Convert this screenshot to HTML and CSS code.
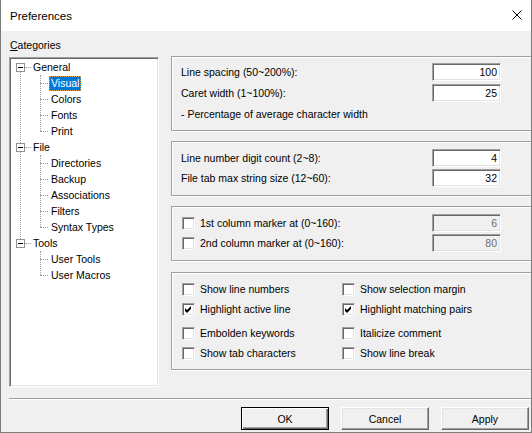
FILE: index.html
```html
<!DOCTYPE html>
<html lang="en">
<head>
<meta charset="UTF-8">
<title>Preferences</title>
<link rel="stylesheet" href="styles.css">
</head>
<body>

<div class="window">
  <!-- title bar -->
  <div class="titlebar">
    <span>Preferences</span>
    <svg class="close" width="10" height="10" viewBox="0 0 10 10"><path d="M0.5 0.5L9.5 9.5M9.5 0.5L0.5 9.5" stroke="#000" stroke-width="1"/></svg>
  </div>

  <div class="dialog-body">
    <div class="main">
      <!-- categories tree -->
      <div class="categories">
        <div class="cat-label"><span class="u">C</span>ategories</div>
        <ul class="tree">
          <li>
            <div class="row"><span class="toggle"></span><span class="label">General</span></div>
            <ul class="children">
              <li><span class="label selected">Visual</span></li>
              <li><span class="label">Colors</span></li>
              <li><span class="label">Fonts</span></li>
              <li><span class="label">Print</span></li>
            </ul>
          </li>
          <li>
            <div class="row"><span class="toggle"></span><span class="label">File</span></div>
            <ul class="children">
              <li><span class="label">Directories</span></li>
              <li><span class="label">Backup</span></li>
              <li><span class="label">Associations</span></li>
              <li><span class="label">Filters</span></li>
              <li><span class="label">Syntax Types</span></li>
            </ul>
          </li>
          <li>
            <div class="row"><span class="toggle"></span><span class="label">Tools</span></div>
            <ul class="children">
              <li><span class="label">User Tools</span></li>
              <li><span class="label">User Macros</span></li>
            </ul>
          </li>
        </ul>
      </div>

      <!-- visual page -->
      <div class="pages">
        <div class="group group-spacing">
          <div class="field-row"><span>Line spacing (50~200%):</span><input class="edit" type="text" value="100" readonly></div>
          <div class="field-row"><span>Caret width (1~100%):</span><input class="edit" type="text" value="25" readonly></div>
          <div class="field-row"><span>- Percentage of average character width</span></div>
        </div>

        <div class="group">
          <div class="field-row"><span>Line number digit count (2~8):</span><input class="edit" type="text" value="4" readonly></div>
          <div class="field-row"><span>File tab max string size (12~60):</span><input class="edit" type="text" value="32" readonly></div>
        </div>

        <div class="group">
          <div class="field-row">
            <label class="check"><span class="box"></span>1st column marker at (0~160):</label>
            <input class="edit" type="text" value="6" disabled>
          </div>
          <div class="field-row">
            <label class="check"><span class="box"></span>2nd column marker at (0~160):</label>
            <input class="edit" type="text" value="80" disabled>
          </div>
        </div>

        <div class="group group-checks">
          <div class="check-grid">
            <label class="check"><span class="box"></span>Show line numbers</label>
            <label class="check"><span class="box"></span>Show selection margin</label>
            <label class="check"><span class="box"><svg width="7" height="7" viewBox="0 0 7 7"><path d="M0 2L2 4L6 0L6 3L2 7L0 5Z" fill="#000"/></svg></span>Highlight active line</label>
            <label class="check"><span class="box"><svg width="7" height="7" viewBox="0 0 7 7"><path d="M0 2L2 4L6 0L6 3L2 7L0 5Z" fill="#000"/></svg></span>Highlight matching pairs</label>
          </div>
          <div class="check-grid">
            <label class="check"><span class="box"></span>Embolden keywords</label>
            <label class="check"><span class="box"></span>Italicize comment</label>
            <label class="check"><span class="box"></span>Show tab characters</label>
            <label class="check"><span class="box"></span>Show line break</label>
          </div>
        </div>
      </div>
    </div>

    <div class="separator"></div>

    <div class="buttons">
      <button class="btn default">OK</button>
      <button class="btn">Cancel</button>
      <button class="btn">Apply</button>
    </div>
  </div>
</div>

</body>
</html>
```

FILE: styles.css
```css
:root{
  --face:   #f0f0f0;   /* dialog background */
  --shadow: #a0a0a0;   /* 3d shadow */
  --dark:   #696969;   /* 3d dark shadow */
  --light:  #e3e3e3;   /* 3d light */
  --select: #0078d7;
}
*{ box-sizing:border-box; }

body{
  margin:0;
  font-family:"Liberation Sans", Arial, sans-serif;
  font-size:10.5px;
  color:#000;
  background:#fff;
}

/* the dialog window */
.window{
  width:532px; height:433px;
  border:1px solid #7a7a7a;
  border-top:none;
  background:var(--face);
  display:flex;
  flex-direction:column;
  overflow:hidden;
}

.titlebar{
  flex:none;
  height:31px;
  background:#fff;
  display:flex;
  align-items:center;
  justify-content:space-between;
  padding:0 9px;
  font-size:11.5px;
}
.close{ margin-top:-1px; }

.dialog-body{
  flex:1;
  display:flex;
  flex-direction:column;
  padding:7px 0 0 8px;
}
.main{
  display:flex;
  align-items:flex-start;
  gap:12px;
}

/* categories tree */
.categories{ width:150px; flex:none; }
.cat-label{ line-height:14px; margin-bottom:5px; padding-left:1px; }
.u{ text-decoration:underline; }

.tree{
  height:330px;
  margin:0;
  padding:1px;
  list-style:none;
  background:#fff;
  border:1px solid;
  border-color:var(--shadow) #fff #fff var(--shadow);
  box-shadow:inset 1px 1px var(--dark), inset -1px -1px var(--light);
}
.tree li{ position:relative; }
.tree > li:not(:last-child)::before{
  content:"";
  position:absolute;
  left:9px; top:13px; bottom:-4px;
  border-left:1px dotted var(--shadow);
}
.row{ display:flex; height:16px; }
.toggle{
  position:relative;
  flex:none;
  width:9px; height:9px;
  margin:4px 6px 0 5px;
  border:1px solid #919191;
  background:#fff;
}
.toggle::before{
  content:"";
  position:absolute;
  left:1px; top:3px;
  width:5px; height:1px;
  background:#000;
}
.toggle::after{
  content:"";
  position:absolute;
  left:8px; top:3px;
  width:6px;
  border-top:1px dotted var(--shadow);
}
.label{
  display:inline-block;
  height:15px;
  margin-top:1px;
  padding:0 2px;
  line-height:15px;
  white-space:nowrap;
}
.label.selected{
  background:var(--select);
  color:#fff;
  outline:1px dotted #e8a33c;
  outline-offset:-1px;
}
.children{
  position:relative;
  margin:0; padding:0;
  list-style:none;
}
.children::before{
  content:"";
  position:absolute;
  left:29px; top:0; bottom:8px;
  border-left:1px dotted var(--shadow);
}
.children li{ height:16px; padding-left:38px; }
.children li::before{
  content:"";
  position:absolute;
  left:29px; top:8px;
  width:8px;
  border-top:1px dotted var(--shadow);
}

/* right side pages */
.pages{
  flex:1;
  margin-top:18px;
  display:flex;
  flex-direction:column;
  gap:10px;
}
.group{
  display:flex;
  flex-direction:column;
  gap:2px;
  padding:7px 30px 8px 9px;
  border:1px solid var(--shadow);
  border-right:none;
  box-shadow:inset 1px 1px #fff, 0 1px #fff;
}
.group-spacing{ gap:3px; padding:6px 30px 7px 9px; }
.group-checks{ margin-top:1px; gap:8px; padding-top:8px; }

.field-row{
  display:flex;
  align-items:center;
  justify-content:space-between;
  height:18px;
}
.edit{
  width:69px; height:18px;
  margin:0;
  padding:0 3px 0 2px;
  font:inherit;
  color:#000;
  text-align:right;
  background:#fff;
  border:1px solid;
  border-color:var(--shadow) #fff #fff var(--shadow);
  box-shadow:inset 1px 1px var(--dark), inset -1px -1px var(--light);
  outline:none;
}
.edit:disabled{
  background:var(--face);
  color:#6d6d6d;
  -webkit-text-fill-color:#6d6d6d;
  opacity:1;
}

/* checkboxes */
.check-grid{
  display:grid;
  grid-template-columns:160px 1fr;
  grid-auto-rows:16px;
  row-gap:4px;
}
.check{
  display:flex;
  align-items:center;
  gap:5px;
  white-space:nowrap;
}
.box{
  flex:none;
  width:13px; height:13px;
  margin-left:1px;
  padding:2px;
  display:flex;
  background:#fff;
  border:1px solid;
  border-color:var(--shadow) #fff #fff var(--shadow);
  box-shadow:inset 1px 1px var(--dark), inset -1px -1px var(--light);
}
.box svg{ display:block; }

/* bottom */
.separator{
  margin-top:11px;
  height:2px;
  border-top:1px solid var(--shadow);
  border-bottom:1px solid #fff;
}
.buttons{
  display:flex;
  justify-content:flex-end;
  gap:12px;
  margin-top:7px;
  padding-right:2px;
}
.btn{
  width:88px; height:23px;
  margin:0; padding:0;
  font:inherit;
  color:#000;
  background:var(--face);
  border:1px solid;
  border-color:#fff var(--dark) var(--dark) #fff;
  box-shadow:inset -1px -1px var(--shadow), inset 1px 1px var(--light);
}
.btn.default{
  border-color:#000;
  box-shadow:inset 1px 1px #fff, inset -1px -1px var(--dark), inset -2px -2px var(--shadow);
}
```
